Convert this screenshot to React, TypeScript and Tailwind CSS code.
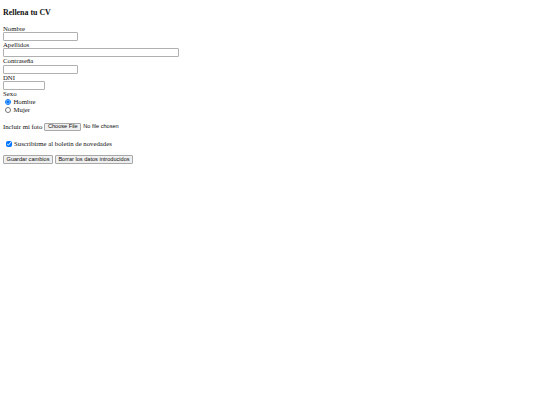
export default function App() {
  return (
    <div className="min-h-screen bg-white px-[3px] pt-[8px] text-[#111] font-['Liberation_Serif',serif]">
      <h3 className="text-[7.9px] leading-[9px] font-bold">Rellena tu CV</h3>

      <form className="mt-[7.5px] text-[6.75px] leading-[7.4px]">
        <label className="block">Nombre</label>
        <input
          type="text"
          className="block w-[75px] h-[9px] border border-[#b0b0b0] rounded-[1px] bg-white"
        />

        <label className="block">Apellidos</label>
        <input
          type="text"
          className="block w-[176px] h-[9px] border border-[#b0b0b0] rounded-[1px] bg-white"
        />

        <label className="block">Contraseña</label>
        <input
          type="password"
          className="block w-[75px] h-[9px] border border-[#b0b0b0] rounded-[1px] bg-white"
        />

        <label className="block">DNI</label>
        <input
          type="text"
          className="block w-[42px] h-[9px] border border-[#b0b0b0] rounded-[1px] bg-white"
        />

        <div className="leading-[7.8px]">Sexo</div>
        <label className="flex items-center h-[8px]">
          <input
            type="radio"
            name="sexo"
            defaultChecked
            className="ml-[2px] mr-[3px] w-[5.5px] h-[5.5px] accent-[#0075ff]"
          />
          Hombre
        </label>
        <label className="flex items-center h-[8px]">
          <input
            type="radio"
            name="sexo"
            className="ml-[2px] mr-[3px] w-[5.5px] h-[5.5px] accent-[#0075ff]"
          />
          Mujer
        </label>

        <div className="mt-[7.5px] flex items-center h-[11px]">
          <span>Incluir mi foto</span>
          <button
            type="button"
            className="ml-[2px] h-[8.5px] px-[2.5px] border border-[#a8a8a8] rounded-[1px] bg-[#efefef] font-['Liberation_Sans',sans-serif] text-[5.6px] leading-none"
          >
            Choose File
          </button>
          <span className="ml-[2px] font-['Liberation_Sans',sans-serif] text-[5.6px]">
            No file chosen
          </span>
        </div>

        <label className="mt-[7.5px] flex items-center h-[7.5px]">
          <input
            type="checkbox"
            defaultChecked
            className="ml-[2.5px] mr-[2.5px] w-[6px] h-[6px] accent-[#0075ff]"
          />
          Suscribirme al boletín de novedades
        </label>

        <div className="mt-[7.5px] flex gap-[2px]">
          <button
            type="button"
            className="h-[9px] w-[50px] border border-[#a8a8a8] rounded-[1px] bg-[#efefef] font-['Liberation_Sans',sans-serif] text-[5.6px] leading-none"
          >
            Guardar cambios
          </button>
          <button
            type="button"
            className="h-[9px] w-[78px] border border-[#a8a8a8] rounded-[1px] bg-[#efefef] font-['Liberation_Sans',sans-serif] text-[5.6px] leading-none"
          >
            Borrar los datos introducidos
          </button>
        </div>
      </form>
    </div>
  );
}
